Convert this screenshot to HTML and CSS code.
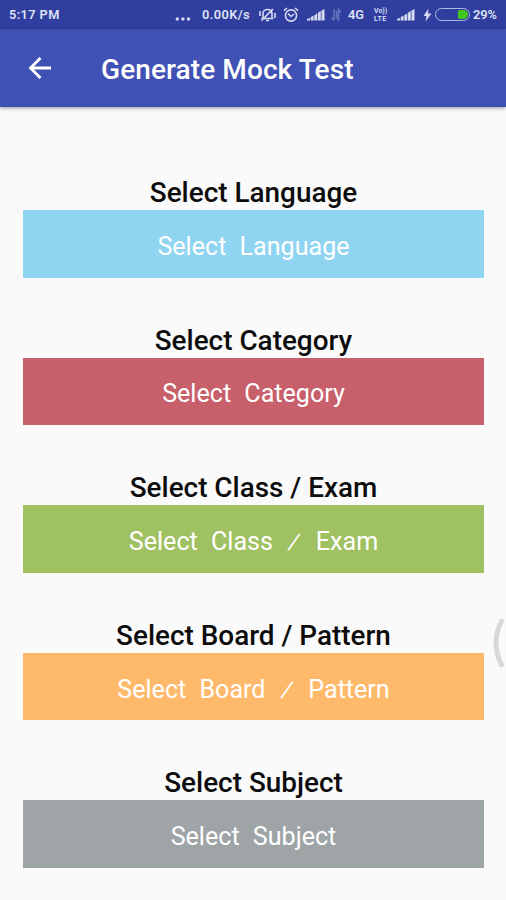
FILE: index.html
```html
<!DOCTYPE html>
<html lang="en">
<head>
  <meta charset="UTF-8" />
  <meta name="viewport" content="width=device-width, initial-scale=1.0" />
  <title>Generate Mock Test</title>
  <link rel="stylesheet" href="styles.css">
</head>
<body>
  <div class="statusbar">
    <span class="time">5:17 PM</span>
    <svg class="dots" width="16" height="16" viewBox="0 0 16 16"><circle cx="2.3" cy="12" r="1.7"/><circle cx="7.9" cy="12" r="1.7"/><circle cx="13.5" cy="12" r="1.7"/></svg>
    <span class="speed">0.00K/s</span>
    <svg class="mute line" width="17" height="16" viewBox="0 0 17 16">
      <path d="M4 11.500V6.500C4 4 6 2.500 8.500 2.500S13 4 13 6.500V11.500zM2.500 11.500h12M7 13.500h3M2.500 13.500L14 2M1 4v5M16 6v5"/>
    </svg>
    <svg class="alarm line" width="16" height="16" viewBox="0 0 16 16">
      <circle cx="8" cy="8.500" r="5.600"/><path d="M5 6.500l3 3 3-2.500M1 3.700L4 1M12 1l3 2.700"/>
    </svg>
    <svg class="signal" width="18" height="14" viewBox="0 0 18 14">
      <path d="M0 12.500V11l3-1v2.500zM3.700 12.500V9l2.900-1.200V12.500zM7.300 12.500V7.200L10.200 5.500V12.500zM10.900 12.500V4.800L13.800 3V12.500zM14.500 12.500V2.500L17.500 1V12.500z"/>
    </svg>
    <svg class="data" width="11" height="14" viewBox="0 0 11 14"><path d="M3 1v11M0.500 9.500L3 12.500M7.500 13V1.500L10 4.500M5.500 3v8"/></svg>
    <span class="network">4G</span>
    <span class="volte"><span class="vo">Vo))</span><span>LTE</span></span>
    <svg class="signal" width="18" height="14" viewBox="0 0 18 14">
      <path d="M0 12.500V11l3-1v2.500zM3.700 12.500V9l2.900-1.200V12.500zM7.300 12.500V7.200L10.200 5.500V12.500zM10.900 12.500V4.800L13.800 3V12.500zM14.500 12.500V2.500L17.500 1V12.500z"/>
    </svg>
    <svg class="bolt" width="9" height="14" viewBox="0 0 9 14"><path d="M5.500 0.500L0.500 8h3L2.500 13.500L8.500 5.500H5z"/></svg>
    <span class="battery"><span class="level"></span></span>
    <span class="percent">29%</span>
  </div>

  <div class="topbar">
    <svg class="back" width="24" height="24" viewBox="0 0 24 24"><path d="M23 12H3M12.500 2L2.500 12l10 10"/></svg>
    <h1>Generate Mock Test</h1>
  </div>

  <div class="main-content">
    <div class="section">
      <h2>Select Language</h2>
      <button class="btn language">Select Language</button>
    </div>
    <div class="section">
      <h2>Select Category</h2>
      <button class="btn category">Select Category</button>
    </div>
    <div class="section">
      <h2>Select Class / Exam</h2>
      <button class="btn exam">Select Class <span class="slash">/</span> Exam</button>
    </div>
    <div class="section">
      <h2>Select Board / Pattern</h2>
      <button class="btn board">Select Board <span class="slash">/</span> Pattern</button>
    </div>
    <div class="section">
      <h2>Select Subject</h2>
      <button class="btn subject">Select Subject</button>
    </div>
  </div>

  <svg class="edge-handle" width="14" height="52" viewBox="0 0 14 52"><path d="M9.500 4Q-1.500 26 9.500 48"/></svg>
</body>
</html>
```
FILE: styles.css
```css
body {
  margin: 0;
  height: 900px;
  overflow: hidden;
  font-family: Roboto, sans-serif;
  background-color: #fafafa;
  color: #0c0c0c;
}
.statusbar {
  display: flex;
  align-items: center;
  height: 29px;
  padding-left: 9px;
  background-color: #303f9f;
  color: #dfe2f5;
  font-size: 12.8px;
  font-weight: 600;
  letter-spacing: 0.4px;
  white-space: nowrap;
}
.statusbar > * {
  flex-shrink: 0;
}
.statusbar svg {
  fill: #d5d9f0;
}
.statusbar .line,
.statusbar .data {
  fill: none;
  stroke: #d5d9f0;
  stroke-width: 1.6;
}
.statusbar .data {
  stroke: #6673bd;
  margin-left: 6px;
}
.time {
  width: 166px;
}
.speed {
  width: 50px;
  margin-left: 11px;
}
.mute,
.alarm {
  margin-left: 7px;
}
.signal {
  margin-left: 8px;
}
.network {
  width: 18px;
  margin-left: 6px;
  letter-spacing: 0;
}
.volte {
  display: flex;
  flex-direction: column;
  width: 15px;
  margin-left: 8px;
  font-size: 7px;
  line-height: 8px;
  letter-spacing: 0.5px;
}
.volte .vo {
  letter-spacing: 0;
}
.bolt {
  margin-left: 8px;
}
.battery {
  display: flex;
  justify-content: flex-end;
  box-sizing: border-box;
  width: 35px;
  height: 13px;
  margin-left: 3px;
  padding: 1px;
  border: 1.5px solid #aeb6e2;
  border-radius: 7px;
}
.level {
  width: 10px;
  border-radius: 2px 5px 5px 2px;
  background-color: #43c51c;
}
.percent {
  margin-left: 3px;
  letter-spacing: 0;
}
.topbar {
  display: flex;
  align-items: center;
  height: 78px;
  padding-left: 28px;
  background-color: #3f51b5;
  box-shadow: 0 1px 4px rgba(0, 0, 0, 0.4);
}
.back {
  fill: none;
  stroke: white;
  stroke-width: 2.8;
}
.topbar h1 {
  margin: 2px 0 0 49px;
  color: white;
  font-size: 28px;
  font-weight: 500;
  letter-spacing: 0.1px;
}
.main-content {
  padding: 69px 22px 0 23px;
}
.section {
  height: 147.6px;
}
.section h2 {
  margin: 0;
  font-size: 27.9px;
  font-weight: 500;
  line-height: 34px;
  text-align: center;
}
.btn {
  display: block;
  width: 100%;
  height: 67.5px;
  padding: 5px 0 0;
  border: none;
  font-family: inherit;
  font-size: 25.1px;
  color: white;
  word-spacing: 7px;
  cursor: pointer;
}
.language {
  background-color: #8fd4f1;
}
.category {
  background-color: #c8606c;
}
.exam {
  background-color: #a0c162;
}
.board {
  background-color: #ffb96b;
}
.subject {
  background-color: #9fa4a7;
}
.slash {
  display: inline-block;
  margin: 0 3px;
  transform: skewX(-14deg) scaleY(0.85);
}
.edge-handle {
  position: absolute;
  top: 617px;
  right: 0;
  fill: none;
  stroke: #d8d8d8;
  stroke-width: 5;
  stroke-linecap: round;
}
```
